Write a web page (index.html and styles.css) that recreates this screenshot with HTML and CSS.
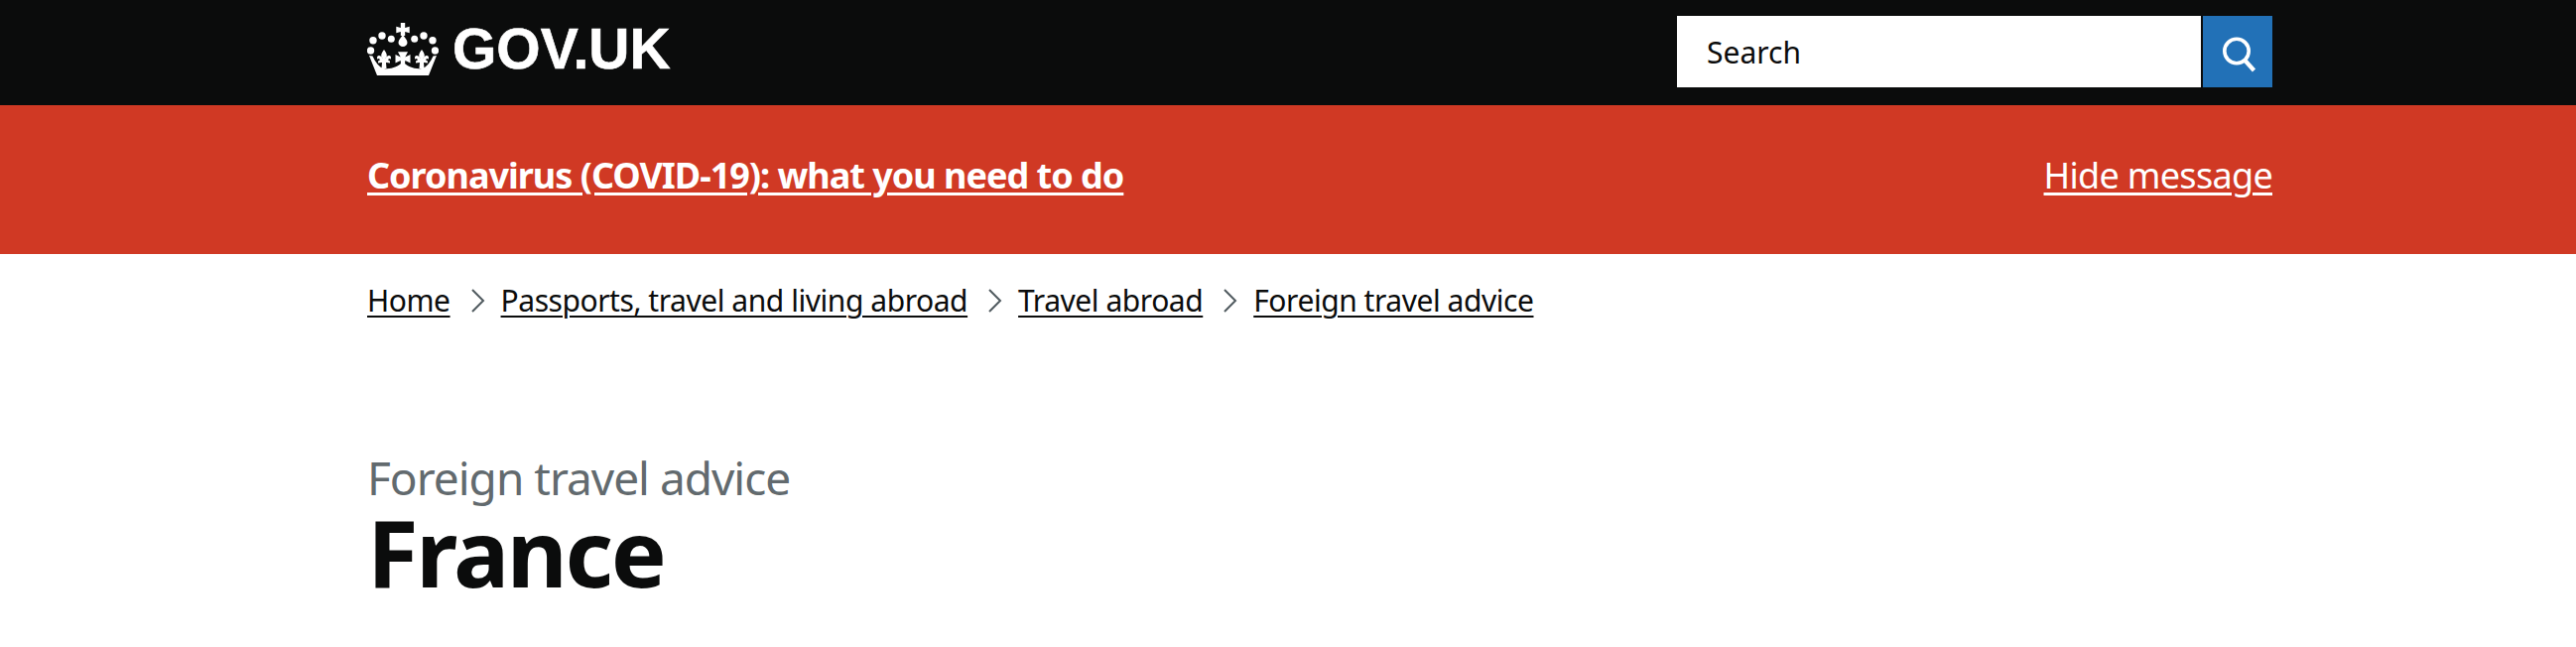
FILE: index.html
```html
<!DOCTYPE html>
<html lang="en">
<head>
<meta charset="utf-8">
<title>Foreign travel advice: France - GOV.UK</title>
<link rel="stylesheet" href="styles.css">
</head>
<body>
<header class="topbar">
  <div class="wrap topbar-inner">
    <a class="logo" href="#">
      <svg class="crown" viewBox="0 0 72 53" width="72" height="53" aria-hidden="true">
        <defs>
          <path id="fleur" d="M0 0C1.500 2 2.800 4 2.800 6C2.800 7 2.200 8 1.600 8.500L1.600 9C2 7 4 5.500 5.500 6C7.500 6.500 7.500 9 6 10C6 9 5 8.500 4.500 9.500C4 10.500 4.500 11.500 6 11.500L6 13.500L2 13L2.500 19H-2.500L-2 13L-6 13.500L-6 11.500C-4.500 11.500 -4 10.500 -4.500 9.500C-5 8.500 -6 9 -6 10C-7.500 9 -7.500 6.500 -5.500 6C-4 5.500 -2 7 -1.600 9L-1.600 8.500C-2.200 8 -2.800 7 -2.800 6C-2.800 4 -1.500 2 0 0z"/>
        </defs>
        <g fill="#fff">
          <path d="M33.800 0h4.400v5l4.500-1.200v6.400l-4.500-1.200v4h-4.400V9l-4.500 1.200V3.800l4.500 1.200z"/>
          <path d="M36 12c2.200 3 4.500 5.500 4.500 8a4.500 4 0 0 1-9 0c0-2.500 2.300-5 4.500-8z"/>
          <circle cx="6" cy="17.700" r="3.700"/><circle cx="15" cy="13" r="3.700"/><circle cx="24.300" cy="16.300" r="3.500"/>
          <circle cx="47.700" cy="16.300" r="3.500"/><circle cx="57" cy="13" r="3.700"/><circle cx="66" cy="17.700" r="3.700"/>
          <circle cx="3.500" cy="28" r="3.700"/><circle cx="68.500" cy="28" r="3.700"/>
          <use href="#fleur" x="17" y="27"/>
          <use href="#fleur" x="55" y="27"/>
          <path d="M31 29.300h10l-2.700 5.200 5.200-2.500v8.500l-5.200-2.500 -0.300 4h-4l-0.300-4-5.200 2.500V32l5.200 2.500z"/>
          <path d="M2 33l3.500.5C8 39 12 45 17 46c7 1 15-2 19-7 4 5 12 8 19 7 5-1 9-7 11.500-12.500L70 33l-8 20H10z"/>
        </g>
      </svg>
      <span class="logo-text">GOV.UK</span>
    </a>
    <form class="search">
      <input class="search-input" type="text" value="Search" aria-label="Search">
      <button class="search-btn" type="button" aria-label="Search">
        <svg viewBox="0 0 70 72" width="70" height="72" aria-hidden="true"><circle cx="34" cy="35.500" r="12.200" fill="none" stroke="#fff" stroke-width="3.600"/><path d="M42.500 45l9 10" stroke="#fff" stroke-width="4.200" fill="none"/></svg>
      </button>
    </form>
  </div>
</header>
<section class="banner">
  <div class="wrap banner-inner">
    <a class="banner-link" href="#">Coronavirus (COVID-19): what you need to do</a>
    <a class="banner-hide" href="#">Hide message</a>
  </div>
</section>
<nav class="wrap crumbs">
  <a href="#">Home</a>
  <svg class="chev" viewBox="0 0 15 24" width="15" height="24" aria-hidden="true"><path d="M2 1l11 11L2 23"/></svg>
  <a href="#">Passports, travel and living abroad</a>
  <svg class="chev" viewBox="0 0 15 24" width="15" height="24" aria-hidden="true"><path d="M2 1l11 11L2 23"/></svg>
  <a href="#">Travel abroad</a>
  <svg class="chev" viewBox="0 0 15 24" width="15" height="24" aria-hidden="true"><path d="M2 1l11 11L2 23"/></svg>
  <a href="#">Foreign travel advice</a>
</nav>
<main class="wrap title">
  <p class="caption">Foreign travel advice</p>
  <h1 class="heading">France</h1>
</main>
</body>
</html>
```
FILE: styles.css
```css
* { box-sizing: border-box; }
html, body { margin: 0; padding: 0; background: #fff; }
body { font-family: "Noto Sans", "Liberation Sans", sans-serif; color: #0b0c0c; height: 652px; overflow: hidden; }
.wrap { width: 1920px; margin-left: 370px; }
.topbar { background: #0b0c0c; height: 106px; }
.topbar-inner { display: flex; justify-content: space-between; align-items: flex-start; }
.logo { display: flex; align-items: center; gap: 14px; padding-top: 23px; color: #fff; text-decoration: none; }
.crown { display: block; }
.logo-text { font-family: "Liberation Sans", sans-serif; font-weight: 700; font-size: 57px; line-height: 53px; -webkit-text-stroke: 0.6px #fff; }
.search { display: flex; gap: 2px; margin-top: 16px; }
.search-input { width: 528px; height: 72px; border: 0; padding: 0 30px; background: #fff; font: 400 30px "Noto Sans", sans-serif; color: #0b0c0c; }
.search-btn { width: 70px; height: 72px; border: 0; padding: 0; background: #2271b7; display: flex; align-items: center; justify-content: center; }
.banner { background: #d03924; height: 150px; }
.banner-inner { display: flex; justify-content: space-between; padding-top: 48px; color: #fff; }
.banner-inner a { color: #fff; text-decoration: underline; text-underline-offset: 4px; text-decoration-thickness: 3px; }
.banner-link { font-weight: 700; font-size: 36px; line-height: 46px; letter-spacing: -1px; }
.banner-hide { font-size: 36px; line-height: 46px; letter-spacing: -0.7px; }
.crumbs { display: flex; align-items: center; padding-top: 26px; font-size: 30px; line-height: 42px; letter-spacing: -0.45px; }
.crumbs a { color: #0b0c0c; text-decoration: underline; text-underline-offset: 4px; text-decoration-thickness: 2px; }
.chev { display: block; margin: 0 16px 0 20px; fill: none; stroke: #505a5f; stroke-width: 2; }
.title { padding-top: 131px; }
.caption { margin: 0; font-size: 46px; line-height: 52px; letter-spacing: -1px; color: #626a6e; }
.heading { margin: 0; font-size: 94px; line-height: 98px; font-weight: 700; letter-spacing: -2.4px; }
```
